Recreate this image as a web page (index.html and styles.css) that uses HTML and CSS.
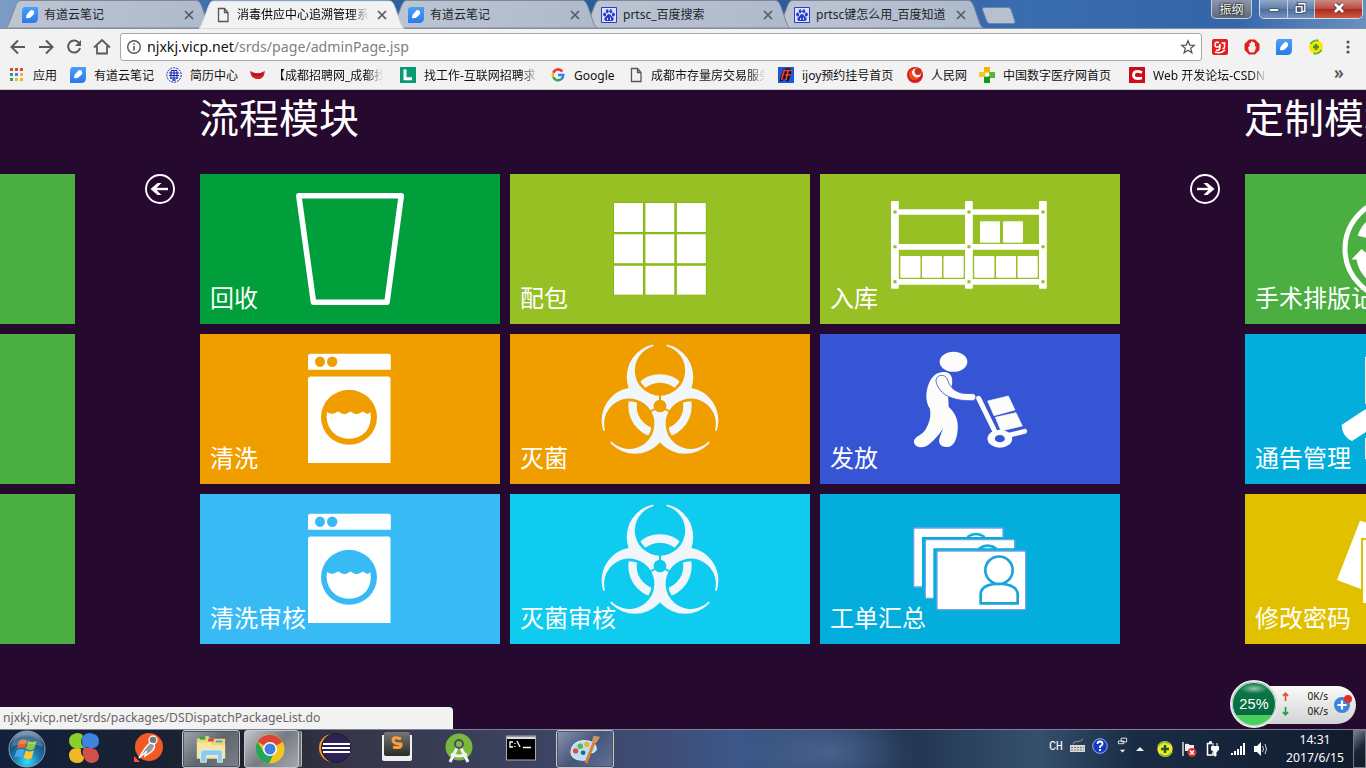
FILE: index.html
```html
<!DOCTYPE html>
<html lang="zh-CN">
<head>
<meta charset="utf-8">
<title>消毒供应中心追溯管理系统</title>
<link rel="stylesheet" href="styles.css">
</head>
<body>
<svg class="defs" aria-hidden="true">
  <defs>
    <linearGradient id="tabfill" x1="0" y1="0" x2="1" y2="0"><stop offset="0" stop-color="#bcc5d2"/><stop offset="1" stop-color="#aeb9cb"/></linearGradient>
    <linearGradient id="note" x1="0" y1="0" x2="0" y2="1"><stop offset="0" stop-color="#49a0f7"/><stop offset="1" stop-color="#2b78ec"/></linearGradient>
    <radialGradient id="orb" cx=".5" cy=".85" r=".9"><stop offset="0" stop-color="#35dcff"/><stop offset=".4" stop-color="#1c78ae"/><stop offset=".75" stop-color="#14456f"/><stop offset="1" stop-color="#a9c7da"/></radialGradient>
    <linearGradient id="key" x1="0" y1="0" x2="0" y2="1"><stop offset="0" stop-color="#777"/><stop offset="1" stop-color="#2b2b2b"/></linearGradient>
    <mask id="horns" maskUnits="userSpaceOnUse" x="0" y="0" width="300" height="150">
      <g fill="#fff"><circle cx="150" cy="43" r="33.3"/><circle cx="124.900" cy="86.500" r="33.3"/><circle cx="175.100" cy="86.500" r="33.3"/></g>
      <g id="cut" fill="#000"><circle cx="150" cy="36.500" r="25.200"/><path d="M143.400 5h13.200v20h-13.200zM149 60h2v12h-2z"/></g>
      <use href="#cut" transform="rotate(120 150 72)"/><use href="#cut" transform="rotate(240 150 72)"/>
      <circle cx="150" cy="72" r="6.300" fill="#000"/>
    </mask>
    <clipPath id="lobes"><circle cx="150" cy="36.500" r="22.500"/><circle cx="119.300" cy="89.700" r="22.500"/><circle cx="180.700" cy="89.700" r="22.500"/></clipPath>
    <symbol id="biohazard" viewBox="0 0 300 150">
      <rect width="300" height="150" mask="url(#horns)"/>
      <circle cx="150" cy="72" r="27.500" fill="none" stroke="#f0f6fa" stroke-width="8.400" clip-path="url(#lobes)"/>
    </symbol>
    <symbol id="washer" viewBox="0 0 300 150">
      <path fill-rule="evenodd" d="M110.500 19.700h78q2.300 0 2.300 2.300v13.700h-82.800V22q0-2.300 2.500-2.300zM115 27.700a5 5.200 0 1 0 10 0a5 5.200 0 1 0-10 0zM127 27.700a5.200 5.200 0 1 0 10.400 0a5.200 5.200 0 1 0-10.400 0z"/>
      <path fill-rule="evenodd" d="M110 42.500h79l1.500 1.500v85H108V44zM121 83.300a28 27.500 0 1 0 56 0a28 27.500 0 1 0-56 0z"/>
      <path d="M127 78q3 2.500 7 1.500l4-2 4 2q3 1 5 0l3.500-2 3.500 2q3 1 5 0l4-2 3 2q3 1 4.500-1.500q1.500 12-4.500 19.500q-7 7.200-17 7.200t-17-7.200q-7-8.500-5-19.500z"/>
    </symbol>
    <symbol id="cloudnote" viewBox="0 0 16 16"><path d="M3 0h13v11q0 5-5 5H0V4q0-4 3-4z" fill="url(#note)"/><path d="M4 11q-.5-3 2-5l3-3q4 0 3 4l-3 3q-2 2-5 1z" fill="#fff"/></symbol>
    <symbol id="paw" viewBox="0 0 16 16"><path d="M.5.5h15v15H.5z" fill="#dfe4f2" stroke="#2a3bd0"/><g fill="#2a3bd0"><ellipse cx="3.600" cy="7.500" rx="1.500" ry="2"/><ellipse cx="6.200" cy="4.300" rx="1.400" ry="2"/><ellipse cx="9.800" cy="4.300" rx="1.400" ry="2"/><ellipse cx="12.400" cy="7.500" rx="1.500" ry="2"/><path d="M8 7q1.500 0 2.500 2l2 2q.8 3-2 3H5.500q-2.800 0-2-3l2-2Q6.500 7 8 7z"/></g><path d="M6.500 11v2M9.500 10.500V13" stroke="#dde"/></symbol>
    <symbol id="doc" viewBox="0 0 12 16"><path d="M1.500 1.500h6l3.500 4v9H1.500zM7.500 1.500v4H11" fill="none" stroke="#555" stroke-width="1.300"/></symbol>
    <symbol id="tab" viewBox="0 0 206 28"><path d="M0 28C3 27 9 4 12 1.500q1-1 3-1h175q2 0 3 1C197 5 201 27 205 28z"/></symbol>
    <symbol id="close" viewBox="0 0 10 10"><path d="M1 1l8 8M9 1L1 9" stroke="#555b66" stroke-width="1.700"/></symbol>
  </defs>
</svg>
<div class="desktop">
  <header class="titlebar">
    <div class="tab t1"><svg class="tab-bg"><use href="#tab"/></svg><svg class="fav"><use href="#cloudnote"/></svg><span>有道云笔记</span><svg class="x"><use href="#close"/></svg></div>
    <div class="tab active"><svg class="tab-bg"><use href="#tab"/></svg><svg class="fav"><use href="#doc"/></svg><span class="fade">消毒供应中心追溯管理系</span><svg class="x"><use href="#close"/></svg></div>
    <div class="tab t3"><svg class="tab-bg"><use href="#tab"/></svg><svg class="fav"><use href="#cloudnote"/></svg><span>有道云笔记</span><svg class="x"><use href="#close"/></svg></div>
    <div class="tab t4"><svg class="tab-bg"><use href="#tab"/></svg><svg class="fav"><use href="#paw"/></svg><span>prtsc_百度搜索</span><svg class="x"><use href="#close"/></svg></div>
    <div class="tab t5"><svg class="tab-bg"><use href="#tab"/></svg><svg class="fav"><use href="#paw"/></svg><span>prtsc键怎么用_百度知道</span><svg class="x"><use href="#close"/></svg></div>
    <svg class="newtab" viewBox="0 0 34 17"><path d="M3 .5h24q2 0 3 2l4 12q0 2-1.500 2H9q-2 0-3-2L1.500 3Q1 .5 3 .5z" fill="#b6c0cf" stroke="#6f86a8"/></svg>
    <div class="wincontrols">
      <span class="user">振纲</span>
      <div class="winbtns">
        <svg class="min" viewBox="0 0 28 18"><path d="M9.500 8.500h10v3h-10z" fill="#fff" stroke="#46536b"/></svg>
        <svg class="max" viewBox="0 0 27 18"><path d="M10.500 3.500h7v8h-7zM8.500 6.500h6v6h-6z" fill="#5b7192" stroke="#46536b" stroke-width="3"/><path d="M10.500 3.500h7v8h-3M8.500 6.500h6v6h-6z" fill="none" stroke="#fff" stroke-width="1.400"/></svg>
        <svg class="cls" viewBox="0 0 47 18"><path d="M20 4l8 8M28 4l-8 8" stroke="#552c2c" stroke-width="4.500"/><path d="M20 4l8 8M28 4l-8 8" stroke="#fff" stroke-width="2.800"/></svg>
      </div>
    </div>
  </header>

  <div class="toolbar">
    <svg class="nav" viewBox="0 0 112 34" fill="none" stroke="#5a5a5a" stroke-width="2">
      <path d="M25 18H12M18 11.500L11.500 18l6.500 6.500M39 18h13M46 11.500l6.500 6.500-6.500 6.500"/>
      <path d="M79 14a6 6 0 1 0 1 5"/><path d="M81 11v6h-6z" fill="#5a5a5a" stroke="none"/>
      <path d="M94 18.500l8-7.500 8 7.500M97 17v7.500h10V17" stroke-width="1.800"/>
    </svg>
    <div class="omnibox">
      <svg class="info" viewBox="0 0 16 16"><circle cx="8" cy="8" r="6.300" fill="none" stroke="#555" stroke-width="1.400"/><path d="M7.200 7h1.600v4.500H7.200zM7.200 4.300h1.600v1.500H7.200z" fill="#555"/></svg>
      <span class="url"><b>njxkj.vicp.net</b>/srds/page/adminPage.jsp</span>
      <svg class="star" viewBox="0 0 16 16"><path d="M8 1.800l1.700 4.300 4.600.3-3.600 2.900 1.200 4.500L8 11.300l-3.900 2.500 1.200-4.500-3.600-2.900 4.600-.3z" fill="none" stroke="#555" stroke-width="1.300"/></svg>
    </div>
    <div class="extensions">
      <svg viewBox="0 0 16 16"><rect width="16" height="16" rx="2" fill="#e21f1f"/><path d="M7 3.500q-4-1-4 2t3 2.500q2 0 2-3v4q-1 3-4 2M9.500 4h4M12.500 4v4q0 2-2 1.500M3 13q6 2 10-2" fill="none" stroke="#fff" stroke-width="1.500"/></svg>
      <svg viewBox="0 0 16 16"><path d="M5 .5h6L15.500 5v6L11 15.500H5L.5 11V5z" fill="#d9231f"/><path d="M5 12.500L4 8l1.500-.5V4H7V2.500h1.500V3H10v1h1v4l1.300-1L11 12l-1.500 1.500h-3z" fill="#f7eded"/></svg>
      <svg viewBox="0 0 16 16"><use href="#cloudnote"/></svg>
      <svg viewBox="0 0 16 16"><circle cx="8" cy="8" r="7" fill="#ffe500"/><path d="M2.500 5q3-4.500 8-3.500M13.500 11q-3 4.500-8 3.500" stroke="#54b948" stroke-width="1.800" fill="none"/><path d="M8 5v6M5 8h6" stroke="#399b2f" stroke-width="2.600"/></svg>
      <svg viewBox="0 0 16 16" fill="#555"><circle cx="8" cy="3" r="1.600"/><circle cx="8" cy="8" r="1.600"/><circle cx="8" cy="13" r="1.600"/></svg>
    </div>
  </div>

  <nav class="bookmarks">
    <div class="bm"><svg viewBox="0 0 16 16"><path d="M1 1h3v3H1zM6 1h3v3H6zM11 1h3v3h-3z" fill="#e6433a"/><path d="M1 6h3v3H1z" fill="#2ea35a"/><path d="M6 6h3v3H6z" fill="#3d84ee"/><path d="M11 6h3v3h-3zM6 11h3v3H6zM11 11h3v3h-3z" fill="#f3b42a"/><path d="M1 11h3v3H1z" fill="#2ea35a"/></svg><span>应用</span></div>
    <div class="bm"><svg><use href="#cloudnote"/></svg><span>有道云笔记</span></div>
    <div class="bm"><svg viewBox="0 0 16 16" fill="none" stroke="#1020b8"><circle cx="8" cy="8" r="7.200" stroke-dasharray="2 1"/><path d="M5 3.500h6M3 6h10M3 8.500h10M4 11h8M6 13h4M5 4v8M8 3v11M11 4v8"/></svg><span>简历中心</span></div>
    <div class="bm"><svg viewBox="0 0 18 16"><path d="M1 4l5 2h5l5-2-1 4-1 2-3 2H7l-4-2-1-2z" fill="#d31f26"/><path d="M4 7l4 1.500M13 7L9 8.500" stroke="#801"/></svg><span class="fade w108">【成都招聘网_成都找</span></div>
    <div class="bm"><svg viewBox="0 0 16 16"><path d="M0 0h16v16H0z" fill="#079b74"/><path d="M5 2.500v9.300h7" fill="none" stroke="#fff" stroke-width="3"/></svg><span class="fade w114">找工作-互联网招聘求</span></div>
    <div class="bm"><svg viewBox="0 0 16 16" fill="none" stroke-width="2.600"><path d="M12.300 4.500A5.200 5.200 0 0 0 3.300 5.700" stroke="#e33d2f"/><path d="M3.300 5.700a5.200 5.200 0 0 0 0 4.600" stroke="#f5b51d"/><path d="M3.300 10.300a5.200 5.200 0 0 0 8.200 1.600" stroke="#2fa653"/><path d="M11.500 11.900Q13.200 10.500 13.200 8H8" stroke="#3f7de8"/></svg><span>Google</span></div>
    <div class="bm"><svg class="thin"><use href="#doc"/></svg><span class="fade w114">成都市存量房交易服务</span></div>
    <div class="bm"><svg viewBox="0 0 16 16"><path d="M0 0h16v16H0z" fill="#1c57d8"/><path d="M7 2L3 14M7 3h6M6 8h7M12 4l-3 10M8 3L6 12" stroke="#120a18" stroke-width="3"/><path d="M6.500 2.500L3.500 13M7 3.500h7M7 8h6M10 4L8 13" stroke="#f0412a" stroke-width="1.700"/></svg><span>ijoy预约挂号首页</span></div>
    <div class="bm"><svg viewBox="0 0 16 16"><circle cx="8" cy="8" r="8" fill="#d41b17"/><circle cx="9.500" cy="6" r="4.800" fill="#fff4e8"/><path d="M5 2q-2 7 7 10-8 3-10-3-1-4 3-7z" fill="#e8511f"/><circle cx="11" cy="4.500" r="3.400" fill="#d92a1d"/></svg><span>人民网</span></div>
    <div class="bm"><svg viewBox="0 0 16 16"><path d="M5 0h6v5L5 6z" fill="#f5b400"/><path d="M0 5h6l1 5H0z" fill="#f3c62b"/><path d="M5 10l6-1v7H5z" fill="#119a18"/><path d="M10 5h6v6h-5z" fill="#4fb735"/><path d="M6.500 6.500h3v3h-3z" fill="#fff"/></svg><span>中国数字医疗网首页</span></div>
    <div class="bm"><svg viewBox="0 0 16 16"><path d="M0 0h16v16H0z" fill="#ce0b17"/><path d="M13 5.500q-8-3-8.500 2.200T13 11" fill="none" stroke="#fff" stroke-width="2.800"/></svg><span class="fade w114">Web 开发论坛-CSDN</span></div>
    <span class="more">»</span>
  </nav>

  <main class="metro">
    <section class="strip"><div class="tile leaf"></div><div class="tile leaf"></div><div class="tile leaf"></div></section>
    <svg class="arrow" viewBox="0 0 30 30"><circle cx="15" cy="15" r="14" fill="none" stroke="#fff" stroke-width="1.900"/><path d="M23 15H8" stroke="#fff" stroke-width="2.400"/><path d="M5.500 15l7-6h4l-6 6 6 6h-4z" fill="#fff"/></svg>
    <section class="group">
      <h2>流程模块</h2>
      <div class="tiles">
        <a class="tile green"><svg viewBox="0 0 300 150"><path d="M98.800 21.700h102.500L187 128.300h-73.500z" fill="none" stroke="#fff" stroke-width="5.600" stroke-linejoin="round"/></svg><span>回收</span></a>
        <a class="tile lime"><svg viewBox="0 0 300 150"><g stroke="#84b60d" stroke-width="1"><path d="M103.500 28.500h30v30h-30zM134.900 28.500h30v30h-30zM166.300 28.500h30v30h-30zM103.500 59.800h30v30h-30zM134.900 59.800h30v30h-30zM166.300 59.800h30v30h-30zM103.500 91.200h30v30h-30zM134.900 91.200h30v30h-30zM166.300 91.200h30v30h-30z"/></g></svg><span>配包</span></a>
        <a class="tile lime"><svg viewBox="0 0 300 150" fill="#fcfcfc"><path d="M75 35.300h148v5.400H75zM75 70h148v5.700H75zM75 105h148v5.700H75z"/><rect x="71" y="27" width="7.800" height="87.700" rx="1"/><rect x="145" y="27" width="7.800" height="87.700" rx="1"/><rect x="219" y="27" width="7.800" height="87.700" rx="1"/>
          <g fill="#97c024"><circle cx="75" cy="38" r="1.800"/><circle cx="149" cy="38" r="1.800"/><circle cx="223" cy="38" r="1.800"/><circle cx="75" cy="72.800" r="1.800"/><circle cx="149" cy="72.800" r="1.800"/><circle cx="223" cy="72.800" r="1.800"/><circle cx="75" cy="107.700" r="1.800"/><circle cx="149" cy="107.700" r="1.800"/><circle cx="223" cy="107.700" r="1.800"/></g>
          <rect x="160" y="47.300" width="20" height="21.400" rx="1"/><rect x="183" y="47.300" width="20" height="21.400" rx="1"/><rect x="80.300" y="82" width="20.200" height="21.700" rx="1"/><rect x="102" y="82" width="20" height="21.700" rx="1"/><rect x="123.500" y="82" width="20.200" height="21.700" rx="1"/><rect x="154.200" y="82" width="20.200" height="21.700" rx="1"/><rect x="176" y="82" width="20" height="21.700" rx="1"/><rect x="197.500" y="82" width="20.200" height="21.700" rx="1"/></svg><span>入库</span></a>
        <a class="tile orange"><svg><use href="#washer"/></svg><span>清洗</span></a>
        <a class="tile orange"><svg class="ice"><use href="#biohazard"/></svg><span>灭菌</span></a>
        <a class="tile royal"><svg viewBox="0 0 300 150"><g transform="translate(70 1) scale(.33333)" fill="#fcfcfa">
          <ellipse cx="190.500" cy="80.500" rx="41.500" ry="30"/>
          <path d="M120 138C132 115 150 110 165 111C185 113 189 130 186 150L174 175L176 215C195 232 206 255 203 285C200 320 188 337 170 336C150 336 143 322 150 305L159 280C148 300 125 325 108 334C88 342 70 332 72 318C75 303 95 303 107 283C120 260 123 245 120 222C105 200 106 165 120 138z"/>
          <path d="M138 135C140 117 168 116 173 135C180 160 200 172 220 175L250 176C261 178 260 196 248 197C200 199 165 185 150 165C142 152 138 145 138 135z" stroke="#3655d4" stroke-width="2.500"/>
          <path d="M266 190L320 300M352 302L404 289" stroke="#fcfcfa" stroke-width="15" stroke-linecap="round"/>
          <path d="M293 198L355 183L375 225L312 242zM316 247L378 233L397 273L333 288z" stroke="#fcfcfa" stroke-width="2" stroke-linejoin="round"/>
          <ellipse cx="329.500" cy="311" rx="37" ry="27"/><ellipse cx="329.500" cy="311" rx="15" ry="11" fill="#3655d4"/></g></svg><span>发放</span></a>
        <a class="tile sky"><svg><use href="#washer"/></svg><span>清洗审核</span></a>
        <a class="tile cyan"><svg class="ice"><use href="#biohazard"/></svg><span>灭菌审核</span></a>
        <a class="tile blue"><svg viewBox="0 0 300 150"><g transform="translate(70 -159) scale(.33333)" stroke="#6fa3e6" stroke-width="4">
          <rect x="71" y="579" width="268" height="177" rx="4"/><path d="M96 606h284v190H96z" fill="#04aedc" stroke="none"/><path d="M232 606q26-18 52 0" fill="none" stroke="#1ba8dc" stroke-width="8"/>
          <rect x="106" y="614" width="268" height="176" rx="4"/><path d="M130 640h284v190H130z" fill="#04aedc" stroke="none"/><path d="M267 641q26-18 52 0" fill="none" stroke="#1ba8dc" stroke-width="8"/>
          <rect x="141" y="648" width="266" height="176" rx="4"/>
          <g stroke="#1ba3da" stroke-width="8"><path d="M272 805v-30q4-27 55-29q51 2 56 29v30z"/><circle cx="327" cy="705.500" r="41"/></g></g></svg><span>工单汇总</span></a>
      </div>
    </section>
    <svg class="arrow" viewBox="0 0 30 30"><circle cx="15" cy="15" r="14" fill="none" stroke="#fff" stroke-width="1.900"/><path d="M7 15h15" stroke="#fff" stroke-width="2.400"/><path d="M24.500 15l-7-6h-4l6 6-6 6h4z" fill="#fff"/></svg>
    <section class="group">
      <h2>定制模块</h2>
      <div class="tiles single">
        <a class="tile leaf"><svg viewBox="0 0 300 150"><circle cx="150" cy="75" r="50" fill="none" stroke="#fff" stroke-width="5"/><path d="M112.700 61.700Q115 54 121 48l14-10v29.500zM106.500 85.500L116.500 75l12 10h-6q0 6 9 14l4 16q-21-11-24-29.500z"/></svg><span>手术排版记录</span></a>
        <a class="tile blue"><svg viewBox="0 0 300 150"><path d="M96.500 91L120 75.500h58V98h-57l-14 9q-9.500-4-10.500-16zM120 23h58v46.500h-58zM120 104h14v21h-14z"/></svg><span>通告管理</span></a>
        <a class="tile gold"><svg viewBox="0 0 300 150"><path d="M115 26.700L92 86l24 9 60 10V45z"/><path d="M116 44h80v76h-80z" fill="#e1c000"/><path d="M118 46h76v63h-76z"/></svg><span>修改密码</span></a>
      </div>
    </section>
    <div class="status">njxkj.vicp.net/srds/packages/DSDispatchPackageList.do</div>
    <div class="speed"><div class="ball">25%</div><div class="rates"><p><svg viewBox="0 0 6 8"><path d="M3 8V2M.7 3.500L3 1l2.300 2.500" fill="none" stroke="#e4503c" stroke-width="1.500"/></svg>0K/s</p><p><svg viewBox="0 0 6 8"><path d="M3 0v6M.7 4.500L3 7l2.300-2.500" fill="none" stroke="#1fa04f" stroke-width="1.500"/></svg>0K/s</p></div>
      <svg class="boost" viewBox="0 0 20 20"><circle cx="9" cy="11" r="8" fill="#3b86dc"/><path d="M9 6.500v9M4.500 11h9" stroke="#fff" stroke-width="2.200"/><circle cx="15" cy="5" r="4" fill="#df2f33"/></svg></div>
  </main>

  <footer class="taskbar">
    <div class="task start"><svg viewBox="0 0 38 38"><circle cx="19" cy="19" r="18" fill="url(#orb)" stroke="#8ea4b4"/><path d="M11 11q4-2.500 8-.5l-2 8q-4-2-8 .5z" fill="#e8602c"/><path d="M20 11q4 2 8.500 0l-2.300 8q-4 2-8.200-.3z" fill="#8cc63e"/><path d="M8.500 20.500q4-2.500 8-.5l-2 7.500q-4-2-8 0z" fill="#4aa6e8"/><path d="M17.600 20.500q4 2 8.300 0l-2.300 7.800q-4 2-8-.5z" fill="#fbc82f"/><path d="M3 17Q5 3 19 3t16 14q-16-7-32 0z" fill="#fff" opacity=".22"/></svg></div>
    <div class="task"><svg viewBox="0 0 32 32"><path d="M1 9q0-7 8-8 5 0 6 3-3 4-1 9l2 3q-15 2-15-7z" fill="#8bd02a"/><path d="M14 9q0-8 8-8 9 1 9 8 0 8-9 7-4-2-6 1-2-3-2-8z" fill="#3f83de"/><path d="M1 24q0-8 8-8 3 0 4 1-1 5 3 8 0 6-7 6t-8-7z" fill="#efbb24"/><path d="M16 16q14-2 15 8 0 7-8 7-6-1-7-6-3-5 0-9z" fill="#d4504c"/></svg></div>
    <div class="task"><svg viewBox="0 0 32 32"><circle cx="17" cy="15" r="14" fill="#f15a24"/><path d="M2 24l6 6H2z" fill="#f15a24"/><circle cx="21" cy="8" r="4" fill="#777" stroke="#eee" stroke-width="1.500"/><path d="M18 11q-5 4-11 15l7-6-1 4 6-4q5-4 3-8z" fill="#999" stroke="#fff" stroke-width="1.500"/></svg></div>
    <div class="task open"><svg viewBox="0 0 34 32"><path d="M2 5l12-3 2 3h16v21H2z" fill="#ecd675"/><path d="M5 3h6v3H5z" fill="#2da34b"/><path d="M14 5h6v3h-6z" fill="#d34b35"/><path d="M22 7h7v2h-7z" fill="#4f9bdb"/><path d="M2 9h14l3 3h13v14H2z" fill="#f5e6a2"/><path d="M6 30V20q0-3 3-3h17q3 0 3 3v10h-5v-7H12v7z" fill="#8ccbe9" stroke="#d5f3ff"/></svg></div>
    <div class="task open chrome"><svg viewBox="0 0 32 32"><circle cx="16" cy="16" r="14.500" fill="#f5c51f"/><path d="M16 16L3.500 8.700A14.500 14.500 0 0 1 28.500 9z" fill="#dc4437"/><path d="M3.500 8.700A14.500 14.500 0 0 0 15 30.500l5-10.500-10-1z" fill="#27a35b"/><circle cx="16" cy="16" r="7" fill="#fff"/><circle cx="16" cy="16" r="5.500" fill="#3f7fe6"/></svg></div>
    <div class="task eclipse"><svg viewBox="0 0 32 32"><circle cx="15" cy="16" r="14" fill="#f7941e"/><circle cx="18" cy="16" r="14.500" fill="#2c2255" stroke="#131d33"/><path d="M5 12h27M4 16h28M5 20h27" stroke="#fff" stroke-width="2"/></svg></div>
    <div class="task sublime"><svg viewBox="0 0 32 32"><path d="M1 4h30v24q0 2-2 2H3q-2 0-2-2z" fill="#eee"/><rect x="3" y="1" width="26" height="24" rx="2" fill="url(#key)"/><path d="M20 8q-8-3-8 1t8 4q1 5-8 3" fill="none" stroke="#ff9d3b" stroke-width="3"/></svg></div>
    <div class="task"><svg viewBox="0 0 32 32"><circle cx="16" cy="15" r="13.500" fill="#78b83b"/><path d="M16 12L7 30M16 12l9 18M8 22q8 4 16 0" stroke="#f2f2f2" stroke-width="3" fill="none"/><circle cx="16" cy="12" r="4" fill="#86b94e" stroke="#46515b" stroke-width="2"/></svg></div>
    <div class="task"><svg viewBox="0 0 32 32"><rect x="1.500" y="4" width="29" height="24" fill="#000" stroke="#aaa"/><path d="M2 4.500h28v2.500H2z" fill="#d7dde5"/><path d="M8 10H5v5h3M10 11v1M10 14v1M12 9l3 6M18 15.500h8" stroke="#fff" fill="none" stroke-width="1.300"/></svg></div>
    <div class="task open paint"><svg viewBox="0 0 34 32"><path d="M2 19Q3 8 15 7q15 0 14 10-2 4-6 3-4 0-2 4 1 4-6 4Q2 28 2 19z" fill="#b9dff2" stroke="#e4f5fd"/><circle cx="7" cy="18" r="2.800" fill="#e24a43"/><circle cx="12" cy="13" r="2.800" fill="#56b845"/><circle cx="19" cy="11" r="2.800" fill="#f5ae24"/><circle cx="15" cy="20" r="2.500" fill="#276392"/><path d="M18 31L27 8" stroke="#e17a2d" stroke-width="3"/><path d="M24 9l2-7 7 1-4 7z" fill="#c89462"/></svg></div>
    <div class="tray">
      <span class="lang">CH</span>
      <svg class="kbd" viewBox="0 0 16 16"><path d="M0 7h15v7H0z" fill="#d8d8d8"/><path d="M3 6.500q0-3 4-3t6-2.500" stroke="#999" fill="none"/><path d="M1 9.500h13M1 12h13" stroke="#777" stroke-dasharray="2 1"/></svg>
      <svg class="help" viewBox="0 0 16 16"><circle cx="8" cy="8" r="7.300" fill="#1739c0" stroke="#9bb3ee"/><path d="M5.500 6q0-2.500 2.500-2.500T10.500 6Q10.500 7 8 8.500V10M8 11v2" fill="none" stroke="#fff" stroke-width="1.800"/></svg>
      <svg class="langopt" viewBox="0 0 12 20"><path d="M4.500 1.500h6v4h-6zM1.500 4.500h6v3h-6z" fill="#182638" stroke="#eee"/><path d="M3 14h6l-3 3z" fill="#eee"/></svg>
      <svg class="caret" viewBox="0 0 8 8"><path d="M0 6l4-4 4 4z" fill="#eee"/></svg>
      <svg class="plus" viewBox="0 0 16 16"><circle cx="8" cy="8" r="7.700" fill="#f5e52b"/><path d="M1 5q5-7 12-2M15 11q-5 7-12 2" stroke="#7cc534" stroke-width="2" fill="none"/><path d="M8 4v8M4 8h8" stroke="#175b23" stroke-width="2.500"/></svg>
      <svg class="flag" viewBox="0 0 16 16"><path d="M2 1v14" stroke="#ddd" stroke-width="1.500"/><path d="M4 3q3-1 5 1h4v6H4z" fill="#eee"/><circle cx="11" cy="11.500" r="4.500" fill="#d9302c"/><path d="M9 9.500l4 4M13 9.500l-4 4" stroke="#fff" stroke-width="1.500"/></svg>
      <svg class="plug" viewBox="0 0 16 16"><path d="M7 2.500H2.500v11.500H8V11M4 1h3" fill="none" stroke="#fff" stroke-width="1.500"/><path d="M6.500 5.500h7V9L11 11v4H9.500v-4L6.500 9zM8 2v3M12 2v3" fill="#fff" stroke="#fff"/></svg>
      <svg class="signal" viewBox="0 0 16 16" fill="#fff"><path d="M1 12h2v2H1zM4 10h2v4H4zM7 8h2v6H7zM10 5h2v9h-2zM13 2h2v12h-2z"/></svg>
      <svg class="sound" viewBox="0 0 16 16"><path d="M1 5h3l4-4v14l-4-4H1z" fill="#fff"/><path d="M9.500 5q2 3 0 6M12 3q3 5 0 10" fill="none" stroke="#cdd3db"/></svg>
      <div class="clock"><span>14:31</span><span>2017/6/15</span></div>
      <div class="peek"></div>
    </div>
  </footer>
</div>
</body>
</html>
```
FILE: styles.css
```css
* { box-sizing: border-box; }
body { margin: 0; overflow: hidden; font-family: "Noto Sans", "Noto Sans CJK SC", sans-serif; }
svg { display: block; flex: none; overflow: visible; }
.defs { position: absolute; width: 0; height: 0; }
.desktop { display: flex; flex-direction: column; width: 1366px; height: 768px; overflow: hidden; }

/* window frame and tabs */
.titlebar { display: flex; flex: none; height: 29px; padding-left: 8px; background: linear-gradient(90deg, #7e9dc5 0, #4775b0 10%, #2c5f9f 30%, #2a5a99 55%, #3a6cb0 75%, #3465a9 90%, #6a90c0 100%); border-bottom: 1px solid #8290a6; }
.tab { position: relative; display: flex; align-items: center; flex: none; width: 193px; height: 28px; padding: 2px 7px 0 14px; font-size: 12px; color: #20242c; white-space: nowrap; }
.tab-bg { position: absolute; left: -2px; top: 0; width: 206px; height: 28px; fill: url(#tabfill); stroke: #7c879a; stroke-width: 1; }
.t1 { z-index: 4; } .t3 { z-index: 3; } .t4 { z-index: 2; } .t5 { z-index: 1; }
.tab.active { z-index: 6; height: 29px; padding-bottom: 1px; color: #000; }
.active .tab-bg { fill: #f2f2f2; stroke: #d5dae2; height: 29px; }
.tab .fav { position: relative; width: 16px; height: 16px; margin-right: 6px; }
.tab span { position: relative; flex: 1; line-height: 18px; }
.tab.active span { flex: none; width: 132px; margin-right: 8px; }
.tab .x { position: relative; width: 10px; height: 10px; }
.fade { -webkit-mask-image: linear-gradient(90deg, #000 86%, transparent); mask-image: linear-gradient(90deg, #000 86%, transparent); }
.newtab { width: 34px; height: 17px; margin: 7px 0 0 8px; }
.wincontrols { display: flex; gap: 7px; margin-left: auto; padding-right: 3px; }
.user { width: 41px; height: 19px; border: 1px solid #c5cfdd; border-top: 0; border-radius: 0 0 5px 5px; background: linear-gradient(#8c98aa, #5d6a7d); color: #fff; font-size: 12px; line-height: 19px; text-align: center; text-shadow: 0 0 3px #000, 0 0 2px #000; }
.winbtns { display: flex; height: 19px; border: 1px solid #d3dbe6; border-top: 0; border-radius: 0 0 5px 5px; overflow: hidden; }
.winbtns svg { height: 18px; overflow: hidden; border-right: 1px solid #c2ccda; background: linear-gradient(#93a8c6, #5f7dab 50%, #4a6ca0 50%, #7692bb); }
.winbtns .min { width: 28px; } .winbtns .max { width: 27px; }
.winbtns .cls { width: 47px; border: 0; background: linear-gradient(#cb8a84, #b94a40 50%, #a8281b 50%, #cc5b45); }

/* toolbar */
.toolbar { display: flex; flex: none; height: 33px; padding: 4px 8px 0; background: #f2f2f2; }
.nav { width: 112px; height: 34px; margin: -4px 0 0 -8px; }
.omnibox { display: flex; align-items: center; width: 1082px; height: 28px; margin-left: 8px; padding: 0 5px 0 5px; border: 1px solid #a8a8a8; border-radius: 3px; background: #fff; }
.info { width: 16px; height: 16px; margin-right: 5px; }
.url { flex: 1; font-size: 14.15px; line-height: 20px; color: #808080; white-space: nowrap; }
.url b { font-weight: 400; color: #111; }
.star { width: 16px; height: 16px; }
.extensions { display: flex; gap: 16px; margin: 6px 0 0 10px; }
.extensions svg { width: 16px; height: 16px; }

.bookmarks { display: flex; flex: none; height: 28px; padding: 0 0 1px 9px; background: #f2f2f2; border-bottom: 1px solid #c8c8c8; font-size: 12px; color: #111; }
.bm { display: flex; align-items: center; flex: none; width: 151px; white-space: nowrap; }
.bm svg { width: 16px; height: 16px; margin-right: 8px; }
.bm svg.thin { width: 12px; margin-right: 9px; }
.bm span { padding-top: 2px; line-height: 20px; }
.bm:nth-child(1) { width: 61px; } .bm:nth-child(2) { width: 96px; } .bm:nth-child(3) { width: 83px; }
.bm:nth-child(4) svg { width: 18px; margin-right: 9px; }
.bm:nth-child(4) span { margin-left: -3px; }
.bm:nth-child(5) { width: 150px; } .bm:nth-child(6) { width: 80px; } .bm:nth-child(7) { width: 148px; }
.bm:nth-child(8) { width: 129px; } .bm:nth-child(9) { width: 72px; } .bm:nth-child(10) { width: 150px; } .bm:nth-child(11) { width: 205px; }
.w108 { width: 110px; } .w114 { width: 114px; }
.more { font-size: 17px; font-weight: 600; line-height: 22px; color: #555; }

/* tile page */
.metro { position: relative; display: flex; flex: none; width: 1366px; height: 639px; overflow: hidden; background: #25092f; color: #fff; }
.strip { display: flex; flex: none; flex-direction: column; gap: 10px; width: 75px; margin-right: 70px; padding-top: 84px; }
.strip .tile { width: 75px; }
.arrow { width: 30px; height: 30px; margin: 84px 25px 0 0; }
.group { flex: none; width: 920px; margin-right: 70px; }
h2 { height: 84px; margin: 0 0 0 -1px; font-size: 40px; font-weight: 400; line-height: 56px; }
.tiles { display: grid; grid-template-columns: repeat(3, 300px); gap: 10px; }
.tiles.single { grid-template-columns: 300px; }
.tile { display: grid; height: 150px; overflow: hidden; }
.tile svg { grid-area: 1 / 1; width: 300px; height: 150px; fill: #fff; }
.tile svg.ice { fill: #f0f6fa; }
.tile span { z-index: 1; grid-area: 1 / 1; align-self: end; padding: 0 0 9px 10px; font-size: 24px; line-height: 34px; white-space: nowrap; }
.green { background: #009f3b; } .leaf { background: #4aae40; } .lime { background: #97c024; }
.orange { background: #f09d00; } .royal { background: #3655d4; } .sky { background: #38bbf5; }
.cyan { background: #10cbf0; } .blue { background: #04aedc; } .gold { background: #e1c000; }
.status { position: absolute; left: 0; bottom: 0; width: 453px; height: 22px; padding-left: 3px; border-radius: 0 4px 0 0; background: #f2f2f2; color: #666; font-size: 12.2px; line-height: 21px; }

/* network speed widget */
.speed { position: absolute; left: 1230px; top: 590px; display: flex; align-items: center; width: 126px; height: 48px; }
.speed::before { content: ""; position: absolute; z-index: -1; left: 22px; top: 6px; width: 104px; height: 38px; border-radius: 0 19px 19px 0; background: linear-gradient(#fafafa, #d3d3d3); }
.metro { isolation: isolate; }
.ball { flex: none; width: 48px; height: 48px; border: 2px solid #e8e8e8; border-radius: 50%; background: radial-gradient(ellipse 14px 5px at 50% 15%, #b9d8c8cc 0, transparent 100%), linear-gradient(#0e7a4c 0, #08693f 74%, #49cd5c 74%); box-shadow: inset 0 0 0 1px #bfe0ce; font: 14.5px/44px "Liberation Sans", sans-serif; text-align: center; letter-spacing: .2px; }
.rates { width: 50px; padding-left: 3px; color: #111; font: 10px/15px "Noto Sans", sans-serif; }
.rates p { display: flex; align-items: center; justify-content: space-between; margin: 0; }
.rates svg { width: 7px; height: 9px; margin-left: 1px; }
.boost { width: 20px; height: 20px; margin: 0 0 0 5px; }

/* taskbar */
.taskbar { display: flex; flex: none; height: 39px; border-top: 1px solid #7c8393; background: radial-gradient(ellipse 90px 45px at 830px 22px, #5c7dab88 0, transparent 100%), linear-gradient(90deg, #12203a 0, #1e222e 18%, #363547 25%, #3f4b72 47%, #3c5789 54%, #22344f 66%, #35506c 76%, #1a2c45 83%, #101a2c 100%); }
.task { display: flex; align-items: center; justify-content: center; flex: none; width: 62px; height: 38px; }
.task svg { width: 32px; height: 32px; margin: -2px 2px 0 0; }
.task.start { width: 54px; } .task.start svg { width: 38px; height: 38px; margin: 0; }
.task:nth-child(3) { width: 66px; }
.task.open { width: 58px; border: 1px solid #c3c7ce; border-radius: 3px; background: linear-gradient(135deg, #a3a7ae, #60646f 50%, #7c808b); box-shadow: inset 0 0 0 1px #50545e; }
.task.open svg { margin: 0; }
.task.open.chrome { width: 55px; margin: 0 4px; background: linear-gradient(135deg, #c6c8cc, #777a82 50%, #a5a7ad); box-shadow: 3px 0 0 -1px #70747c, 4px 0 0 -1px #b5b8bf; }
.task.chrome svg { margin-right: 4px; }
.task.eclipse { width: 64px; }
.task.sublime svg { margin-top: -5px; }
.task.open.paint { margin-left: 3px; background: linear-gradient(135deg, #8b95ae, #46557a 50%, #62719a); }
.tray { display: flex; align-items: flex-start; margin-left: auto; color: #fff; }
.tray > svg { width: 16px; height: 16px; margin-top: 11px; }
.lang { width: 21px; margin-top: 9px; font: 12px/16px "Liberation Mono", monospace; letter-spacing: -.5px; }
.tray .kbd { margin-top: 8px; margin-right: 6px; }
.tray .help { margin-top: 8px; margin-right: 9px; }
.tray .langopt { width: 11px; height: 20px; margin: 6px 8px 0 0; }
.tray .caret { width: 8px; height: 8px; margin: 15px 13px 0 0; }
.tray .plus, .tray .flag { margin-right: 8px; }
.tray .plug { margin-right: 9px; }
.tray .signal { margin-right: 7px; }
.tray .sound { margin-right: 16px; }
.clock { display: flex; flex-direction: column; align-items: center; width: 60px; margin-right: 8px; padding-top: 1px; font-size: 12.2px; line-height: 18px; }
.peek { width: 13px; height: 38px; border: 1px solid #727a87; background: linear-gradient(135deg, #778190, #1b2535 50%, #111a29); }
```
